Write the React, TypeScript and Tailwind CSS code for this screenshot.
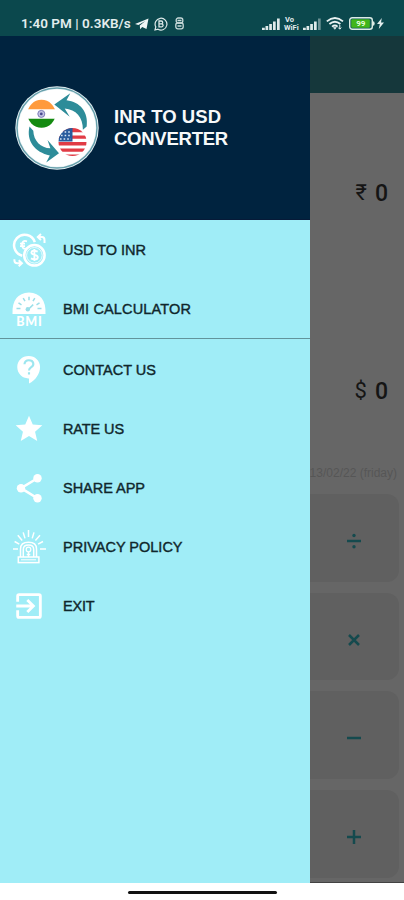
import React from "react";

const Signal = ({ dim = false }: { dim?: boolean }) => (
  <svg width="18" height="12" viewBox="0 0 18 12" fill="#dfeaea">
    <path d="M0 9.8h2.8V12H0zM3.5 8h2.7v4H3.5zM7.2 6h2.7v6H7.2zM11 3.5h2.7V12H11z" />
    <path d="M15 .5h2.7V12H15z" opacity={dim ? 0.45 : 1} />
  </svg>
);

const StatusBar = () => (
  <header className="flex h-9 shrink-0 items-center bg-[#0b484d] pl-[21px] pt-[11px] text-[#e3eded]">
    <span className="w-[111px] whitespace-nowrap font-[Roboto,sans-serif] text-[13.5px] font-semibold leading-none tracking-[0.03px]">
      1:40 PM | 0.3KB/s
    </span>
    <svg className="ml-[3px]" width="14" height="12" viewBox="0 0 14 12" fill="#eef5f5">
      <path d="M0 6 13.5.5 11.5 11 7.2 9.1 5.1 11.2 4.8 7.6 10.4 3 3.4 7.1z" />
    </svg>
    <svg className="ml-[5px]" width="14" height="14" viewBox="0 0 14 14" fill="none" stroke="#dce8e8">
      <path d="M1 13 1.8 9.9A5.9 5.9 0 1 1 4 12.2z" strokeWidth="1.2" />
      <path d="M5 4h2.3a1.4 1.4 0 0 1 0 2.8H5zh0M5 6.8h2.6a1.5 1.5 0 0 1 0 3H5z" strokeWidth="1.3" />
    </svg>
    <svg className="ml-[7px]" width="9" height="13" viewBox="0 0 9 13" fill="none" stroke="#c9dada" strokeWidth="1.3">
      <rect x="1.2" y="1" width="6.6" height="5" rx="2" />
      <rect x=".8" y="6" width="7.4" height="5.8" rx="2" />
      <path d="M2.5 3.5h4M2.5 9h4" />
    </svg>
    <div className="ml-auto flex items-center pr-[20px]">
      <Signal />
      <div className="ml-[4px] mr-[3px] w-[16px] whitespace-nowrap font-[Roboto,sans-serif] text-[7.5px] font-bold leading-[7px]">
        <div className="h-[7px] overflow-visible pl-px">Vo</div>
        <div className="mt-px h-[7px]">WiFi</div>
      </div>
      <Signal dim />
      <svg className="ml-[5px]" width="18" height="13" viewBox="0 0 18 13" fill="none" stroke="#e9f2f2" strokeWidth="1.8">
        <path d="M.8 4.4Q9-2.5 17 4.4M3.4 7Q9 2.4 14.4 7M6 9.6q3-2.3 5.6 0" />
        <path d="M7.5 10.6h2.7L8.8 12.3z" fill="#e9f2f2" strokeWidth=".7" />
        <path d="M13.8 8v4m-1.5-1.4 1.5 1.6 1.5-1.6" strokeWidth="1" />
      </svg>
      <svg className="ml-[5px]" width="26" height="13" viewBox="0 0 26 13">
        <rect x=".7" y=".7" width="22.6" height="11.6" rx="2.5" fill="#15595a" stroke="#dcebe5" strokeWidth="1.4" />
        <rect x="2.3" y="2.3" width="18.5" height="8.4" rx="1" fill="#41b51b" />
        <path d="M24 4.3q1.7 0 1.7 2.2T24 8.7z" fill="#dcebe5" />
        <text x="11.8" y="9.4" textAnchor="middle" fontFamily="Roboto, sans-serif" fontSize="8" fontWeight="700" fill="#e7ffdc">99</text>
      </svg>
      <svg className="ml-[2px]" width="7" height="11" viewBox="0 0 7 11" fill="#e3eded">
        <path d="M4.8 0 0 6h2.8L1.8 11 7 4.6H4z" />
      </svg>
    </div>
  </header>
);

const Logo = () => (
  <svg className="shrink-0" width="86" height="86" viewBox="0 0 86 86">
    <defs>
      <clipPath id="india"><circle cx="27.5" cy="28.8" r="14" /></clipPath>
      <clipPath id="usa"><circle cx="58.5" cy="57" r="14" /></clipPath>
    </defs>
    <circle cx="43" cy="43" r="41.7" fill="#e5f0f3" />
    <circle cx="43" cy="43" r="40" fill="none" stroke="#669fab" strokeWidth="1.4" />
    <circle cx="43" cy="43" r="38.8" fill="#fff" />
    <g clipPath="url(#india)">
      <path fill="#fff" d="M12 14h32v30H12z" />
      <path fill="#ff9a3c" d="M12 14h32v10.3H12z" />
      <path fill="#148a10" d="M12 33.8h32V45H12z" />
    </g>
    <circle cx="27.3" cy="28.9" r="3.5" fill="#c3c3e4" stroke="#7c7cb8" strokeWidth="1" />
    <circle cx="27.3" cy="28.9" r="1.4" fill="#494990" />
    <g clipPath="url(#usa)">
      <path fill="#fff" d="M44 42h30v30H44z" />
      <path fill="#e13b45" d="M44 42h30v5.2H44zm0 8.6h30v3.2H44zm0 6.4h30v3.4H44zm0 6.4h30v3.3H44zm0 6.2h30v3H44z" />
      <path fill="#285b9d" d="M44 42h14.5v14.5H44z" />
      <path d="M47 47h10M47 50.5h10M46 54h11" stroke="#d7e6f5" strokeWidth="1.4" strokeDasharray="1.6 2" />
    </g>
    <path d="m40.3 19.5 16-11.2-3.8 7C66 16.8 74.7 27 72.7 41.5l-3.8 3.3C69 32 62 24.5 50.7 23.5l5 8.3z" fill="#2d8c99" />
    <path d="M15.5 41.6C12 56 21 67.4 35.8 70.6l-3.6 6.9L45 68.3 33.5 55l2.9 8.3c-9.8-.4-16.8-7.6-17.1-17.6z" fill="#2d8c99" />
  </svg>
);

const ExchangeIcon = () => (
  <svg width="34" height="34" viewBox="0 0 34 34" fill="none" stroke="#fff" strokeWidth="2.5">
    <path d="M22.8 9.2A10.6 10.6 0 1 0 10.3 22.7" />
    <circle cx="22.4" cy="22.3" r="10.2" />
    <circle cx="22.4" cy="22.3" r="7.8" strokeWidth=".8" />
    <path d="M15 8.3q-5-1.5-5 3.5t5 3.5M8 10.6h5M8 13.2h5" strokeWidth="1.8" />
    <path d="M25.7 18.6q-5.8-2.2-6.3 1c0 3 6.5 1.6 6.4 4.7-.4 3-5 2.2-6.8 1.1M22.4 16v12" strokeWidth="1.9" />
    <path d="M26 4h4q2.5 0 2.5 3v3M29 1l-3.2 3L29 7M9.8 30.2H5.2q-2.8 0-2.8-3v-1M6.7 27.2l3.2 3-3.2 3" strokeWidth="2" />
  </svg>
);

const BmiIcon = () => (
  <svg className="overflow-visible" width="34" height="36" viewBox="0 0 34 36">
    <path d="M.5 23Q-.3 2.3 17 1.5 34.3 2.3 33.5 23z" fill="#fff" />
    <path d="M4.5 17.5h4M6.5 11.8l3 2M11.2 7.2l1.8 3M17 5.7v3.5M22.8 7.2l-1.8 3M27.5 11.8l-3 2M29.5 17.5h-4M15.7 19l5.5-5.4" fill="none" stroke="#9bdfe9" strokeWidth="1.5" />
    <circle cx="15.8" cy="18.2" r="2.2" fill="#9bdfe9" />
    <text x="17.4" y="35" textAnchor="middle" fontFamily="Lato, sans-serif" fontSize="12.5" fontWeight="900" letterSpacing=".8" fill="#fff">BMI</text>
  </svg>
);

const ContactIcon = () => (
  <svg width="32" height="32" viewBox="0 0 24 24" fill="#fff">
    <path d="M11.8 1.5C6.8 1.5 3.2 5.1 3.2 9.8s3.6 8.5 8.3 8.5h.5v3.9c4.9-2.3 8.3-7.5 8.3-12.4 0-4.7-3.8-8.3-8.5-8.3z" />
    <path d="M8.6 7.7Q8.9 4.7 11.9 4.7c3.8 0 4.3 3.6 1.8 5.2-1.2.8-1.7 1.3-1.7 2.4M12 13.6v1.8" fill="none" stroke="#9ce6ef" strokeWidth="1.6" />
  </svg>
);

const StarIcon = () => (
  <svg width="32" height="32" viewBox="0 0 24 24" fill="#fff">
    <path d="M12 17.27 18.18 21l-1.64-7.03L22 9.24l-7.19-.61L12 2 9.19 8.63 2 9.24l5.46 4.73L5.82 21z" />
  </svg>
);

const ShareIcon = () => (
  <svg width="32" height="32" viewBox="0 0 32 32" fill="#fff">
    <path d="m24 6.5-16 9.7L24 26" fill="none" stroke="#fff" strokeWidth="2.6" />
    <circle cx="24.5" cy="6.2" r="4.2" /><circle cx="8" cy="16.2" r="4.2" /><circle cx="24.5" cy="26.2" r="4.2" />
  </svg>
);

const SirenIcon = () => (
  <svg width="34" height="34" viewBox="0 0 34 34" fill="none" stroke="#fff" strokeWidth="1.5">
    <path d="M8.5 27V19q0-6.7 8-6.7t8 6.7v8M11.3 27v-7.5q0-4.5 5.2-4.5t5.2 4.5V27" />
    <rect x="6.3" y="27" width="20.6" height="5.6" />
    <path d="M9 29.8h15" strokeWidth="1" />
    <circle cx="16.5" cy="19.5" r="2.3" strokeWidth="1.2" />
    <path d="M16.5 22v5M14.7 24.5h3.6" />
    <path d="M16.5 0v7M11.2 2.4l1.8 6M22 2.4l-1.8 6M5.8 5.2l4.4 5.2M28 5.2l-4.6 5.2M2.6 11.5l4.7 2.6M31 11.5l-4.9 2.6M1 19h5M28 19h6" />
  </svg>
);

const ExitIcon = () => (
  <svg width="34" height="34" viewBox="0 0 24 24" fill="#fff">
    <path d="M10.09 15.59 11.5 17l5-5-5-5-1.41 1.41L12.67 11H3v2h9.67zM19 3H5a2 2 0 0 0-2 2v4h2V5h14v14H5v-4H3v4a2 2 0 0 0 2 2h14a2 2 0 0 0 2-2V5a2 2 0 0 0-2-2z" />
  </svg>
);

const Item = ({ icon, label, spacing }: { icon: React.ReactNode; label: string; spacing: string }) => (
  <div className="flex h-[59px] items-center pl-3">
    <div className="flex w-[34px] shrink-0 justify-center">{icon}</div>
    <span className={`ml-[17px] whitespace-nowrap pt-[2px] text-[14.5px] leading-none text-[#10272c] [-webkit-text-stroke:0.4px_#10272c] ${spacing}`}>
      {label}
    </span>
  </div>
);

const Drawer = () => (
  <aside className="flex w-[310px] shrink-0 flex-col bg-[#a0edf7]">
    <div className="flex h-[184px] shrink-0 items-center border-b border-[#061a38] bg-[#00233f] pl-[14px]">
      <Logo />
      <h1 className="ml-[14px] pt-px text-[18.5px] font-bold leading-[22px] tracking-[-0.25px] text-[#f7f9fa]">
        <span className="tracking-[0.05px]">INR TO USD</span><br />CONVERTER
      </h1>
    </div>
    <nav className="h-[119px] border-b border-[#62949c]">
      <Item icon={<ExchangeIcon />} label="USD TO INR" spacing="tracking-[-0.03px]" />
      <Item icon={<BmiIcon />} label="BMI CALCULATOR" spacing="tracking-[0.15px]" />
    </nav>
    <nav className="pt-[1px]">
      <Item icon={<ContactIcon />} label="CONTACT US" spacing="tracking-[0px]" />
      <Item icon={<StarIcon />} label="RATE US" spacing="tracking-[-0.1px]" />
      <Item icon={<ShareIcon />} label="SHARE APP" spacing="tracking-[-0.03px]" />
      <Item icon={<SirenIcon />} label="PRIVACY POLICY" spacing="tracking-[0px]" />
      <Item icon={<ExitIcon />} label="EXIT" spacing="tracking-[-0.2px]" />
    </nav>
  </aside>
);

const operators = ["M-7 0H7", "M-5-5 5 5M5-5-5 5", "M-7 0H7", "M-7 0H7M0-7V7"];

const Amount = ({ symbol }: { symbol: string }) => (
  <div className="flex h-[30px] items-center justify-end gap-[8px] pr-4 font-[Roboto,sans-serif] text-[23px] leading-none text-[#151515]">
    <span className="text-[22px]">{symbol}</span>
    <span className="font-medium">0</span>
  </div>
);

const Calculator = () => (
  <main className="flex min-w-0 flex-1 flex-col border-b border-[#424242] bg-[#666]">
    <div className="h-[57px] shrink-0 bg-[#15373b]" />
    <div className="pt-[85px]"><Amount symbol="₹" /></div>
    <div className="pt-[168px]"><Amount symbol="$" /></div>
    <div className="mt-[59px] flex h-[16px] justify-end overflow-hidden whitespace-nowrap pr-[7px] text-[12px] leading-4 text-[#565656]">
      13/02/22 (friday)
    </div>
    <div className="mt-[13px] flex flex-col gap-[11px] pr-[5px]">
      {operators.map((path, index) => (
        <div key={index} className="flex h-[87.7px] items-center justify-center rounded-r-[12px] bg-[#606060] pr-[2px] pt-[6px]">
          <svg width="18" height="18" viewBox="-9 -9 18 18" fill="none" stroke="#154a4e" strokeWidth="2.5">
            <path d={path} />
            {index === 0 && <><circle cx="0" cy="-5.5" r="1.7" fill="#154a4e" stroke="none" /><circle cx="0" cy="5.7" r="1.7" fill="#154a4e" stroke="none" /></>}
          </svg>
        </div>
      ))}
    </div>
  </main>
);

export default function App() {
  return (
    <div className="flex h-[900px] w-[404px] flex-col overflow-hidden bg-white font-['Liberation_Sans',Arial,sans-serif]">
      <StatusBar />
      <div className="flex h-[847px] shrink-0">
        <Drawer />
        <Calculator />
      </div>
      <footer className="flex flex-1 justify-center pt-[8px]">
        <div className="h-[3px] w-[149px] rounded-full bg-[#111]" />
      </footer>
    </div>
  );
}
